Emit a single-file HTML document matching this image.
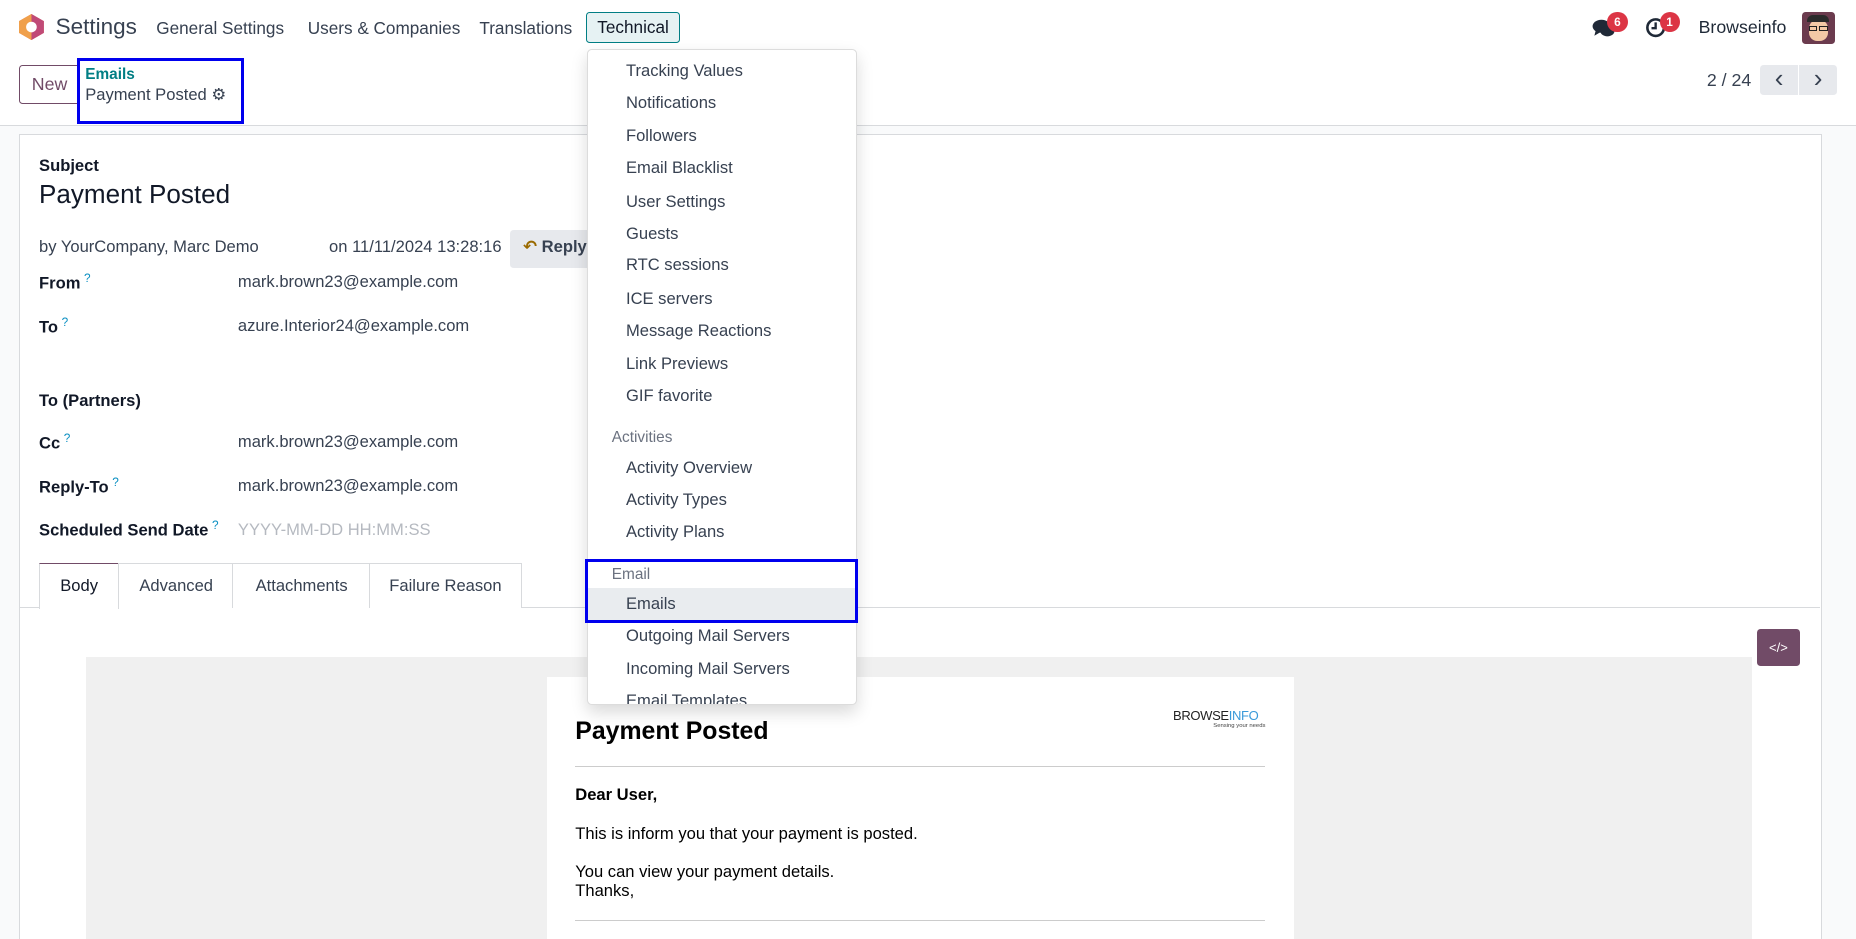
<!DOCTYPE html>
<html><head><meta charset="utf-8"><style>
html{zoom:1.18367;overflow:hidden;height:793px}
body{margin:0;height:793px;overflow:hidden}
#w{width:1568px;height:793px;overflow:hidden;background:#f9fafb;font-family:"Liberation Sans","DejaVu Sans",sans-serif;font-size:14px;color:#374151;position:relative}
.a{position:absolute;white-space:nowrap}
.nav{position:absolute;left:0;top:0;width:1568px;height:46px;background:#fff}
.cp{position:absolute;left:0;top:46px;width:1568px;height:60px;background:#fff;border-bottom:1px solid #d8dadd}
.card{position:absolute;left:16px;top:113px;width:1522px;height:680px;background:#fff;border:1px solid #d8dadd;border-bottom:none}
.lbl{font-weight:bold;color:#111827}
.q{color:#0a8fc2;font-size:10px;vertical-align:super;font-weight:normal;margin-left:3px}
.val{color:#374151}
.tab{position:absolute;top:476px;height:37px;border:1px solid #d8dadd;border-bottom:none;background:#fff;line-height:37px;text-align:center;color:#374151}
.dd{position:absolute;left:496px;top:41px;width:226px;height:553px;background:#fff;border:1px solid #dcdcdc;border-radius:4px;box-shadow:0 6px 14px rgba(0,0,0,.15);overflow:hidden}
.it{position:absolute;left:32px;color:#374151;font-size:14px}
.hd{position:absolute;left:20px;color:#6b7280;font-size:13px}
.badge{position:absolute;background:#dc3545;color:#fff;font-size:10px;font-weight:bold;border-radius:9px;width:17px;height:17px;text-align:center;line-height:17px}
</style></head><body><div id="w">
<div class="nav">
 <svg class="a" style="left:16px;top:12px" width="21" height="22" viewBox="0 0 21 22"><polygon points="10.5,0 21,6 21,16 10.5,22 0,16 0,6" fill="#e46f4f"/><polygon points="10.5,0 21,6 21,16 10.5,22" fill="#c04a77"/><polygon points="0,6 10.5,0 10.5,22 0,16" fill="#f0a04b"/><circle cx="10.5" cy="11" r="4.5" fill="#fff"/></svg>
 <div class="a" style="left:47px;top:12px;font-size:19px;color:#374151">Settings</div>
 <div class="a" style="left:132px;top:15px;font-size:14.5px">General Settings</div>
 <div class="a" style="left:260px;top:15px;font-size:14.5px">Users &amp; Companies</div>
 <div class="a" style="left:405px;top:15px;font-size:14.5px">Translations</div>
 <div class="a" style="left:495px;top:10px;width:78px;height:25px;background:#e6f2f3;border:1px solid #017e84;border-radius:3px;font-size:14.5px;line-height:25px;text-align:center;color:#111827">Technical</div>
 <svg class="a" style="left:1345px;top:15px" width="20" height="18" viewBox="0 0 20 18"><ellipse cx="8" cy="7" rx="7.5" ry="5.5" fill="#1f2937"/><path d="M3 11 L2 15 L7 12Z" fill="#1f2937"/><ellipse cx="13" cy="11" rx="6" ry="4.5" fill="#1f2937"/></svg>
 <div class="badge" style="left:1358px;top:10px">6</div>
 <svg class="a" style="left:1390px;top:14px" width="18" height="18" viewBox="0 0 18 18"><circle cx="9" cy="9" r="7" fill="none" stroke="#1f2937" stroke-width="2.2"/><path d="M9 4.5V9.5H5.5" fill="none" stroke="#1f2937" stroke-width="2"/></svg>
 <div class="badge" style="left:1402px;top:10px">1</div>
 <div class="a" style="left:1435px;top:14px;font-size:15px;color:#1f2937">Browseinfo</div>
 <div class="a" style="left:1522px;top:10px;width:28px;height:27px;border-radius:3px;background:#6b3b4e;overflow:hidden"><div style="position:absolute;left:6px;top:7px;width:16px;height:18px;border-radius:7px;background:#f3c9a6"></div><div style="position:absolute;left:5px;top:3px;width:18px;height:6px;border-radius:5px 5px 0 0;background:#2b2b2b"></div><div style="position:absolute;left:6px;top:12px;width:7px;height:4px;border:1px solid #222;box-sizing:border-box"></div><div style="position:absolute;left:15px;top:12px;width:7px;height:4px;border:1px solid #222;box-sizing:border-box"></div></div>
</div>
<div class="cp">
 <div class="a" style="left:16px;top:9px;width:54px;height:33px;border:1px solid #714b67;border-radius:3px;box-sizing:border-box;color:#714b67;font-size:15px;line-height:31px;text-indent:10px">New</div>
 <div class="a" style="left:65px;top:3px;width:136px;height:51px;border:3px solid #0000ee;background:#fff"></div>
 <div class="a" style="left:72px;top:10px;color:#017e84;font-weight:bold;font-size:13px">Emails</div>
 <div class="a" style="left:72px;top:26px;font-size:14px;color:#374151">Payment Posted <span style="font-size:14px;color:#374151">&#9881;</span></div>
 <div class="a" style="left:1442px;top:13px;font-size:15px">2 / 24</div>
 <div class="a" style="left:1487px;top:9px;width:32px;height:25px;background:#e7e9ed;border-radius:3px 0 0 3px;text-align:center;line-height:22px;font-size:22px;color:#374151">&#8249;</div>
 <div class="a" style="left:1520px;top:9px;width:32px;height:25px;background:#e7e9ed;border-radius:0 3px 3px 0;text-align:center;line-height:22px;font-size:22px;color:#374151">&#8250;</div>
</div>
<div class="card"></div>
<div class="a lbl" style="left:33px;top:132px">Subject</div>
<div class="a" style="left:33px;top:151px;font-size:22px;color:#111827">Payment Posted</div>
<div class="a" style="left:33px;top:200px">by YourCompany, Marc Demo</div>
<div class="a" style="left:278px;top:200px">on 11/11/2024 13:28:16</div>
<div class="a" style="left:431px;top:194px;width:80px;height:32px;background:#e7e9ed;border-radius:3px"></div>
<div class="a" style="left:442px;top:200px;font-weight:bold;color:#374151"><span style="color:#9a6a00">&#8630;</span> Reply</div>
<div class="a lbl" style="left:33px;top:229px">From<span class="q">?</span></div>
<div class="a val" style="left:201px;top:230px">mark.brown23@example.com</div>
<div class="a lbl" style="left:33px;top:266px">To<span class="q">?</span></div>
<div class="a val" style="left:201px;top:267px">azure.Interior24@example.com</div>
<div class="a lbl" style="left:33px;top:330px">To (Partners)</div>
<div class="a lbl" style="left:33px;top:364px">Cc<span class="q">?</span></div>
<div class="a val" style="left:201px;top:365px">mark.brown23@example.com</div>
<div class="a lbl" style="left:33px;top:401px">Reply-To<span class="q">?</span></div>
<div class="a val" style="left:201px;top:402px">mark.brown23@example.com</div>
<div class="a lbl" style="left:33px;top:438px">Scheduled Send Date<span class="q">?</span></div>
<div class="a" style="left:201px;top:439px;color:#b5b9c0">YYYY-MM-DD HH:MM:SS</div>
<div class="a" style="left:17px;top:513px;width:1521px;height:1px;background:#d8dadd"></div>
<div class="tab" style="left:33px;width:66px;border-top:1px solid #714b67;height:38px;color:#111827">Body</div>
<div class="tab" style="left:100px;width:96px">Advanced</div>
<div class="tab" style="left:196px;width:116px">Attachments</div>
<div class="tab" style="left:312px;width:127px">Failure Reason</div>
<div class="a" style="left:1484px;top:531px;width:37px;height:32px;background:#714b67;border-radius:3px;color:#fff;text-align:center;line-height:32px;font-size:11px">&lt;/&gt;</div>
<div class="a" style="left:73px;top:555px;width:1407px;height:238px;background:#f0f0f0"></div>
<div class="a" style="left:462px;top:572px;width:631px;height:221px;background:#fff"></div>
<div class="a" style="left:486px;top:607px;font-size:21px;font-weight:bold;color:#000">Payment Posted</div>
<div class="a" style="left:991px;top:598px;font-size:11px;letter-spacing:-0.3px;color:#222">BROWSE<span style="color:#3a9ad9">INFO</span></div>
<div class="a" style="left:1025px;top:611px;font-size:5px;color:#444">Sensing your needs</div>
<div class="a" style="left:486px;top:647px;width:583px;height:1px;background:#ccc"></div>
<div class="a" style="left:486px;top:663px;font-weight:bold;color:#000">Dear User,</div>
<div class="a" style="left:486px;top:696px;color:#000">This is inform you that your payment is posted.</div>
<div class="a" style="left:486px;top:728px;color:#000">You can view your payment details.</div>
<div class="a" style="left:486px;top:744px;color:#000">Thanks,</div>
<div class="a" style="left:486px;top:777px;width:583px;height:1px;background:#ccc"></div>
<div class="dd">
 <div class="it" style="top:10px">Tracking Values</div>
 <div class="it" style="top:37px">Notifications</div>
 <div class="it" style="top:65px">Followers</div>
 <div class="it" style="top:92px">Email Blacklist</div>
 <div class="it" style="top:120px">User Settings</div>
 <div class="it" style="top:147px">Guests</div>
 <div class="it" style="top:174px">RTC sessions</div>
 <div class="it" style="top:202px">ICE servers</div>
 <div class="it" style="top:229px">Message Reactions</div>
 <div class="it" style="top:257px">Link Previews</div>
 <div class="it" style="top:284px">GIF favorite</div>
 <div class="hd" style="top:321px">Activities</div>
 <div class="it" style="top:345px">Activity Overview</div>
 <div class="it" style="top:372px">Activity Types</div>
 <div class="it" style="top:399px">Activity Plans</div>
 <div class="hd" style="top:436px">Email</div>
 <div style="position:absolute;left:0;top:455px;width:226px;height:27px;background:#e9ecef"></div>
 <div class="it" style="top:460px">Emails</div>
 <div class="it" style="top:487px">Outgoing Mail Servers</div>
 <div class="it" style="top:515px">Incoming Mail Servers</div>
 <div class="it" style="top:542px">Email Templates</div>
</div>
<div class="a" style="left:494px;top:472px;width:226px;height:49px;border:3px solid #0000ee"></div>
</div></body></html>
